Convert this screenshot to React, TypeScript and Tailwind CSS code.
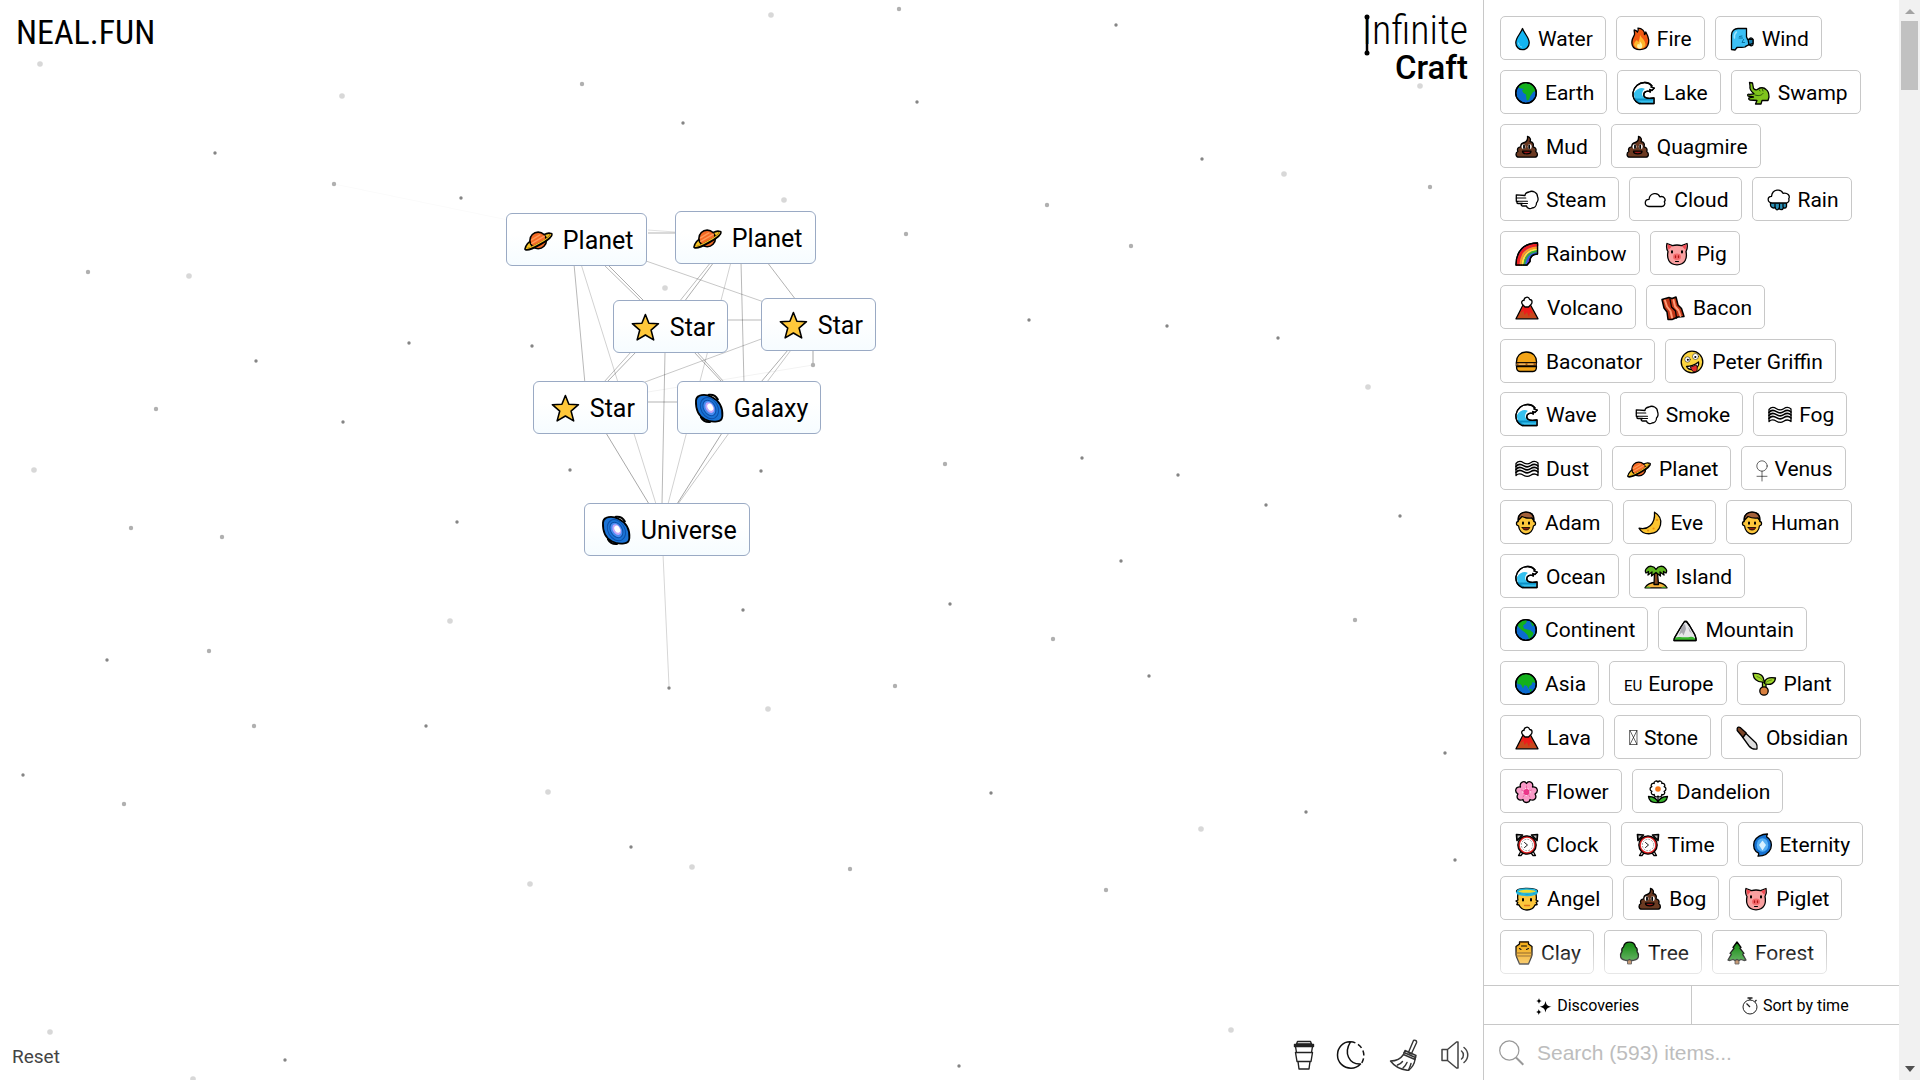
import { clsx } from 'clsx'
import type { ReactNode } from 'react'

type Glyph = { w: number; art: ReactNode }

const globe = (land: string) => (
	<>
		<circle cx="11" cy="12" r="10.3" fill="#0b6bd0" />
		<path d={land} fill="#12b01c" stroke="none" />
		<circle cx="11" cy="12" r="10.3" fill="none" />
	</>
)

const poop = (
	<>
		<path
			d="M12.500 1.300c3 1 3.500 3.500 2.500 5.200c3 .5 4 2.700 3 5.300c3 .7 3.600 2.700 2.700 4.700c2.500 1.500 2.200 5.500-.8 5.700H3.700C.3 22 .3 17.500 2.900 16.500c-1.200-2.700.4-4.500 2.900-4.700c-.2-2.700 1.300-3.800 3.400-4.300c2.300-.6 3.700-2.700 3.300-6.200z"
			fill="#6b3a22"
		/>
		<ellipse cx="8.500" cy="11.700" rx="2" ry="2.400" fill="#fff" stroke="none" />
		<ellipse cx="14.700" cy="11.700" rx="2" ry="2.400" fill="#fff" stroke="none" />
		<path d="M9 10.500v2.600M14.200 10.500v2.600" strokeWidth="1.800" />
		<path d="M7.500 16.200h8.500c0 3.500-8.500 3.500-8.500 0z" fill="#a01818" />
	</>
)

const volcano = (
	<>
		<path d="M8 9L1 22.800h22L15.500 9z" fill="#c8481c" />
		<path d="M8.500 9.500l-3 7l3-1.500l1 4l2.500-3l2 5l1-5l3 2l-3-8.500z" fill="#ee1b1b" stroke="none" />
		<path d="M8 9c-3-3 0-5 1-4.500C9 1 13.500-.3 14.700 3.500c3 0 3 4 .8 5.500l-2 2h-3.500z" fill="#fff" />
	</>
)

const waveShape =
	'M22 22.500H7C2 20 .5 16 1 11.500C2 5.500 7 1.300 13 1.500c3 .2 5.500 1.500 7 3.500l-1 1l3.300 1l-2.500 2.500l-2-1l.5 2.500c-3-2-7 0-6.500 3.500c.5 2.500 4 3.500 10.200 2.500z'

const wave = (
	<>
		<path d={waveShape} fill="#fff" />
		<path d="M2 12c3-5 8-6 11-4c-2 1-3.500 4-2.500 6.500c1.500 3 5 3.300 10.800 2.700V22H7.500C4 20 1.800 17 2 12z" fill="#35c0ee" stroke="none" />
		<path d="M3 18.500h18M8 22c-2-1-4-3-5-4" stroke="#0b8fc4" strokeWidth="2" strokeDasharray="2 1" />
		<path d={waveShape} fill="none" />
	</>
)

const puff = (
	<>
		<path
			d="M10 7.500c0-2.500 2.500-3.200 4-3.500c3.500-2 8.500.5 8.500 4.500c1 2.500.5 5-1 6.500c0 3-2 5-4.500 5c-2 1.500-5 .3-5.500-2H7.500c-1.800-.2-1.800-2.200 0-2.500H3c-1.500-.2-1.500-2 0-2.200H1.300V6.800z"
			fill="#fff"
		/>
		<path d="M1.300 10h9.500M3 13.300h9.500M7.500 15.500h5" strokeWidth="1.100" />
	</>
)

const fog = (
	<>
		<path
			d="M1 6.500c2-2.500 5-2.500 7.500-.8s5 1.500 7.200 0s5-1.800 7.300.3v12.500c-2.300-2-5-1.800-7.300-.3s-4.700 1.500-7.200 0S3 16.500 1 18.500z"
			fill="#fff"
		/>
		<path
			d="M1 9.500c2-2.500 5-2.500 7.500-.8s5 1.500 7.200 0s5-1.800 7.300.3M1 12.500c2-2.500 5-2.500 7.500-.8s5 1.500 7.200 0s5-1.800 7.300.3M1 15.500c2-2.500 5-2.500 7.500-.8s5 1.500 7.200 0s5-1.800 7.300.3"
			strokeWidth="1.600"
		/>
	</>
)

const pig = (
	<>
		<path d="M2 1.500l5.500 2.200c3-.9 6-.9 9 0L22 1.500c1 4-.2 6.500-1 8c1.500 7-1 13.300-9 13.300S1.500 16.500 3 9.500C2 8 1 5.500 2 1.500z" fill="#f9a0a0" />
		<path d="M2.500 2.200L7 4.200L3.500 8zM21.500 2.200L17 4.200L20.500 8z" fill="#f04a52" stroke="none" />
		<ellipse cx="12" cy="14.800" rx="4" ry="3.200" fill="#f4696b" stroke="none" />
		<path d="M10.500 14v1.600M13.500 14v1.600" stroke="#b01616" />
		<path d="M7 9.200v1.400M17 9.200v1.400" strokeWidth="2" />
		<path d="M10.500 19.500h3" strokeWidth="1" />
	</>
)

const planet = (
	<>
		<path d="M5.500 12.500C1.500 15.500.5 18.500 1.500 19.200c2.500 1.800 22-9 21.200-12.200c-.3-1.600-3-1.300-6.200.2" fill="#f7c325" />
		<circle cx="11.800" cy="12" r="6.900" fill="#f56a25" />
		<path d="M6.300 11.500l7-4M6.500 14.500l10.500-6M9 16.500l8.500-5" stroke="#ff9a58" strokeWidth="1.200" />
		<path d="M1.500 19.200c2.500 1.800 22-9 21.200-12.200" fill="none" stroke="#000" strokeWidth="2.600" />
		<path d="M2 18.600c2.800.8 19.600-8.600 20.200-11.400" fill="none" stroke="#f7c325" strokeWidth="1" />
	</>
)

const star = (
	<path
		d="M12 1.300l2.900 7.200l8 .4l-6.200 5.300l2.200 8.200L12 18.300l-6.900 4.100l2.200-8.200L1.100 8.900l8-.4z"
		fill="#ffc83a"
	/>
)

const galaxy = (
	<>
		<path
			d="M3.500 1.500C6 .4 10.500.6 14 2.500c6 3 9.300 9 8.800 16c-.3 3-1.800 4.300-4.300 4.300c-3.500.4-7 .1-10-1.600C3 18.500.5 12.500.8 5.500c.2-2.200 1.200-3.500 2.700-4z"
			fill="#1a73d6"
			strokeWidth="1.500"
		/>
		<path d="M11.500.7c3-.4 6 1 7.500 3.800M12.500 23.300c-3.500.3-6-1.200-7.500-4" strokeWidth="1.800" />
		<ellipse cx="12" cy="11.800" rx="7" ry="9.300" transform="rotate(-30 12 11.800)" fill="none" stroke="#0c4ea8" strokeWidth=".8" />
		<ellipse cx="12" cy="11.600" rx="4.800" ry="6.900" transform="rotate(-30 12 11.600)" fill="#4a8df0" stroke="#0c4ea8" strokeWidth=".8" />
		<ellipse cx="12.300" cy="11.300" rx="3.200" ry="4.800" transform="rotate(-30 12.300 11.300)" fill="#c3a5f8" stroke="none" />
		<ellipse cx="12.700" cy="11" rx="2.200" ry="3.100" transform="rotate(-30 12.700 11)" fill="#fff" stroke="none" />
	</>
)

const man = (
	<>
		<path d="M3.200 8c0-5 3.800-6.800 7.800-6.800S18.800 3 18.800 8v2.500c2.200 0 2.500 4-.3 4.300C18 19.500 15 23 11 23s-7-3.500-7.500-8.200C.7 14.500 1 10.500 3.200 10.500z" fill="#fcc63b" />
		<path d="M3.200 9.500c0-6 3.500-8.300 7.800-8.300s7.800 2.300 7.800 8.300l-2-2.500c-3 .5-7-.2-9.800-1.500z" fill="#a4613a" />
		<path d="M8 11.500v1.300M14 11.500v1.300" strokeWidth="2" />
		<path d="M7.200 16.500h7.600c-.8 3.400-6.800 3.400-7.600 0z" fill="#8a1c10" strokeWidth=".8" />
	</>
)

const clock = (
	<>
		<path d="M1.500 1.500l6 .5l-5.500 5.500zM22.500 1.500l-6 .5L22 7.500z" fill="#bcbcbc" strokeWidth="1.700" />
		<path d="M5.500 19l-2 3.500h2.500l1.500-2M18.500 19l2 3.500H18l-1.500-2" />
		<circle cx="12" cy="12" r="9.200" fill="#d92020" />
		<circle cx="12" cy="12" r="7.200" fill="#fff" stroke="none" />
		<circle cx="12" cy="12" r="5.700" fill="none" stroke="#999" strokeWidth="1" strokeDasharray="1 2" />
		<path d="M9.500 9.500l3 2.500l-3 2.500" strokeWidth=".9" />
	</>
)

const glyphs: Record<string, Glyph> = {
	drop: {
		w: 15,
		art: (
			<>
				<path d="M7.500 1.500c2 5.500 6.700 9 6.700 14.200c0 4-3 7-6.700 7s-6.700-3-6.700-7C.8 10.500 5.500 7 7.500 1.500z" fill="#12b5f2" />
				<path d="M3.500 16c.2 2 1.300 3.300 3 4" stroke="#7fe0ff" strokeWidth="1" />
			</>
		)
	},
	fire: {
		w: 18,
		art: (
			<>
				<path d="M7 1.200c4 0 7 3 6.500 6.300c1-.5 1.300-1.500 1.300-2.500c4 7 3.200 10 2 13.300c-2.300 5.500-13.300 6-15.500 0C-.5 13 3 9.500 3.500 7.500c.3-2-.5-3-.3-4.500c1.500.2 2.500 1 3.300 2c.8-1.200 1-2.500.5-3.800z" fill="#f05a12" />
				<path d="M9 8c1.500 3 5.500 5 5.500 10c-1 4.500-9.500 5-11.500 0c0-3 2-4 3-5c.5 1 .7 1.500 1.500 2C8 13 9 11 9 8z" fill="#ffb52b" stroke="none" />
				<path d="M9 14.500c3 3 3 7 0 7.200c-3.500-.2-3.300-3-2-5l1.300 1z" fill="#fff3a8" stroke="none" />
			</>
		)
	},
	wind: {
		w: 24,
		art: (
			<>
				<path d="M1.500 22.500V8c0-4 3-6.500 6.500-6.500h8.500v8.300l1 2.500h2.300v-1c1.500-.8 3.200 0 3.200 2v4c0 1.500-2 2-3 1l-.8-.8c-1.500 1-2.700.8-4.200 2.500c-2.500 1-5.500 0-8 .5L5 23z" fill="#3cc0f5" />
				<path d="M9 11h3.500M9.500 9.500l2.500-.5M13.500 12.500l-1.500 3h2.500" stroke="#0a6f9c" strokeWidth="1" />
				<path d="M18 12.300l1 5.500l4-1.500v-4z" fill="#157fae" />
				<path d="M6.500 5c-2 2-2.500 4-2 6" stroke="#9be4ff" strokeWidth="1.500" />
			</>
		)
	},
	earth: { w: 22, art: globe('M4 4.500c2-2 4.500-3 7.500-2.800l1 1.500l3-.5c3 1.800 4.700 4 5 7.300l-2.500 1c-1 2.500-2.500 3-3 5c-.5 2.500-2.500 5-3.500 2.500l-.5-5l-2.500-1.500L7 9.500l2-1.500l-5-1z') },
	americas: { w: 22, art: globe('M2.500 6.500c2-3 4-4.500 7.500-4.800l2 1.500l-1.500 2.500L8 7.500l1 3l3 1l3 .5l3.500 3c-.5 3-2 4.500-4.500 6l-1.500-4l-3-3l-3-2l-3-3zM15 3l4.500 3.500l-2 2z') },
	asia: { w: 22, art: globe('M3 5.500c3-3.500 9.500-5 14-1.500c2 1.500 3.500 4.500 3 7l-2.500-1l-1 3l-2 1l-1 3l-1.500-3l-2.500-1l-1.500 3.500l-2-4l-3.500-.5c-.5-2-.2-4.500.5-6.500zM14 17l3.500.5l-2 2.500z') },
	wave: { w: 23, art: wave },
	croc: {
		w: 24,
		art: (
			<>
				<path d="M3.500 1.500l3 .5l1 5.500c1.500 1.500 3 2 4.500.5c2-1.500 6-2 8 .5c2.500 1.500 3 4.500 3 7.500l-1 3.500h-6l-1 3.500H9.500l1.500-3.500l-7-.5c-2-.5-1.500-2.500 0-2.500l3.500-.5L2 15c-1-1.500 0-2 1.500-1.700l4.500-.5c-2.500-2-4.500-5.500-4-7.800z" fill="#7fc31c" />
				<path d="M9 14c3 1 6 1 8-1.500M13 8.500l1 1.500M16.500 8.500l.5 1.500" stroke="#27520a" strokeWidth="1" />
			</>
		)
	},
	poop: { w: 23, art: poop },
	puff: { w: 23, art: puff },
	cloud: {
		w: 22,
		art: <path d="M5 18.500C0 18 0 11.500 5 11.300C6 4.500 14 4 15.800 8.800c4.500-1.300 6.500 3 4.500 5c1.500 2-.3 4.700-2.500 4.700z" fill="#fff" />
	},
	rain: {
		w: 23,
		art: (
			<>
				<path d="M3.500 14.500h16v4c-.7 2-2.500 2-3 .8c-.5 3-4 3-4.300.5c-1 3-4 2.500-4-.5c-1.500 1.700-4.500 0-4.700-2z" fill="#2a8fb5" />
				<path d="M8 16v3M12.500 16v4M16 16v3" strokeWidth="1.200" />
				<path d="M5 15C0 14.500 0 8.500 4.500 8.300C5.500.8 14 .5 16 5.300c4.500-1 7.500 2.500 5.700 5.500c1 2.500-.9 4.200-2.900 4.200z" fill="#fff" />
			</>
		)
	},
	rainbow: {
		w: 23,
		art: (
			<>
				<path d="M1 23C1 9 9 1 22.500 1v11C17 12 15 15 15 19.500l-3 3.500z" fill="#7a2fc0" />
				<path d="M3 22.500C3.500 10.500 10.500 3.500 22 3" stroke="#ee2222" strokeWidth="3" />
				<path d="M5.500 22.500C6 12 12 6.300 22 5.500" stroke="#ff9a1c" strokeWidth="2" />
				<path d="M7.500 22.500C8 13.500 13.500 8 22 7.500" stroke="#ffe63a" strokeWidth="2" />
				<path d="M9.500 22.500C10 15 14.500 10 22 9.300" stroke="#35b435" strokeWidth="2" />
				<path d="M11 22.500C12 15.500 15.500 11.500 22 11" stroke="#2a6ae0" strokeWidth="1.500" />
				<path d="M1 23C1 9 9 1 22.500 1v11C17 12 15 15 15 19.500l-3 3.500z" fill="none" />
			</>
		)
	},
	pig: { w: 24, art: pig },
	volcano: { w: 24, art: volcano },
	bacon: {
		w: 24,
		art: (
			<>
				<path d="M1 3.500l7-2l3 1l4-1.500l2 8l3.500 3.500l2.500 8l-6 .5l-6 2.500h-4L6 16l-3-4z" fill="#c23616" strokeWidth="1.500" />
				<path d="M4 4.500l2 6l3.500 4.500l1.500 6.500M12.500 4l1.500 6.500l3.500 4l2 5.500" stroke="#ff9b77" strokeWidth="2" />
				<path d="M9 3l1.500 8l4 4l1 7" strokeWidth="1.300" />
			</>
		)
	},
	burger: {
		w: 23,
		art: (
			<>
				<path d="M1.500 13C1 6 5.500 2 11.500 2S22 6 21.500 13z" fill="#f4a416" />
				<path d="M1.500 12.500h20v3.500h-20z" fill="#a35b10" strokeWidth=".8" />
				<path d="M4 14.200h6M13 14.200h5" stroke="#e9b25a" strokeWidth="1.500" />
				<path d="M1.500 16.500h20c0 3-1 5-3.500 5H5c-2.500 0-3.500-2-3.500-5z" fill="#f4a416" />
			</>
		)
	},
	zany: {
		w: 24,
		art: (
			<>
				<circle cx="12" cy="12" r="10.800" fill="#fcd53f" />
				<circle cx="7.500" cy="9.500" r="2.700" fill="#fff" strokeWidth=".5" />
				<circle cx="15.500" cy="6.500" r="3" fill="#fff" strokeWidth=".5" />
				<path d="M7.800 9.700h.1M15.300 7h.1" strokeWidth="2" />
				<path d="M6.500 16.500c4 0 8-1.500 12-4.500c1.500 6-8 11-12 4.500z" fill="#fff" />
				<path d="M10.500 17c2-.5 4-1.200 5.800-2.200c1.700 3 1.200 6.500-1.300 7c-2.500.2-4-2-4.500-4.800z" fill="#e02c2c" strokeWidth=".8" />
			</>
		)
	},
	fog: { w: 23, art: fog },
	planet: { w: 24, art: planet },
	venus: {
		w: 12,
		art: (
			<g strokeWidth=".6">
				<circle cx="6" cy="9" r="5.200" fill="none" />
				<path d="M6 14.200V24M1 19.300h10" />
			</g>
		)
	},
	man: { w: 22, art: man },
	moon: {
		w: 24,
		art: (
			<>
				<path d="M16.500 1.200c10.500 6 7 20.500-4.500 21.500c-5 .3-9-2-11-5.500c8 2.200 16.500-3.500 15.500-16z" fill="#fcc42f" />
				<path d="M19 9h.2M15.500 17.500h.2M10 19.500h.2" stroke="#e8920e" strokeWidth="2" />
			</>
		)
	},
	island: {
		w: 24,
		art: (
			<>
				<path d="M1 22.800c2-4 7-5.300 11-5.300s9 1.300 11 5.300z" fill="#f9b43a" />
				<path d="M1 22.800c3-2 4-1.500 6 0h10c2-1.500 3-2 6 0z" fill="#4fb32c" stroke="none" />
				<path d="M10.500 8l-.5 11.500h4.500L13.500 8z" fill="#8a4b20" />
				<path d="M12 4.500C10 .5 5 .5 3 3C1 4.500 1 7 2 8l2.500-1.500L4 10l4-3l-.5 4L12 7.500l4.500 3.500L16 7l4 3l-.5-3.500L22 8c1-1 1-3.500-1-5c-2-2.500-7-2.500-9 1.500z" fill="#5fb520" />
			</>
		)
	},
	mountain: {
		w: 24,
		art: (
			<>
				<path d="M1 22.500c-.3-3 2-4.500 3-7L8.500 8l3-4.500h2l3 4l3.500 6c2 3 3.300 6 3 9z" fill="#e6e6ea" />
				<path d="M8.500 9L6 17l3-2.500l1.500 3L13 11l-1-5zM15 8.500l1.500 5l2.500 2z" fill="#a6a6ae" stroke="none" />
				<path d="M1 22.500c0-3 3-4 6-3.500c3 .5 8 .5 11-.3c2.500.3 4.500 1.300 5 3.800z" fill="#37b52c" stroke="none" />
				<path d="M1 22.500c-.3-3 2-4.500 3-7L8.500 8l3-4.500h2l3 4l3.500 6c2 3 3.300 6 3 9z" fill="none" />
			</>
		)
	},
	seedling: {
		w: 24,
		art: (
			<>
				<path d="M10.500 9v7.500h3.500V10z" fill="#9ed42b" />
				<path d="M1 1.500c7-1 11 2 11 8.500C5 10.500 1.500 7 1 1.500zM12.500 11.500c0-5 4-6.500 11-5.500c-.5 5-5 8-11 5.500z" fill="#9ed42b" />
				<path d="M5 4.500c3 1 5 2.500 6.500 5M19.500 8c-3 .5-4.500 1.500-6.500 3.500" stroke="#4e7d0c" strokeWidth=".8" />
				<circle cx="12" cy="19" r="4.200" fill="#d9803f" />
			</>
		)
	},
	knife: {
		w: 22,
		art: (
			<>
				<path d="M9 6.500L20 17c1.500 2 1.300 4 1 6c-3 .5-6-.5-8-3L6.500 11z" fill="#dcdcdc" />
				<path d="M1.200 2.500c.5-1.500 2-1.700 3-1l6 5.500L7 11.500L1.200 4.500z" fill="#7b4528" />
			</>
		)
	},
	blossom: {
		w: 23,
		art: (
			<>
				<path d="M11.500 3.500c2-3.500 7.500-1.500 6 3.500c5-.5 6.500 4.500 2.500 7c2.500 4-1 7.500-5 5.500c-.5 4-6.500 4-7 0c-4 2-7.500-1.500-5-5.500C-1 11.500.5 6.500 5.500 7C4 2 9.500 0 11.500 3.500z" fill="#f99bc8" />
				<circle cx="11.500" cy="12" r="3.500" fill="#f0348a" stroke="#fff" strokeWidth="1" strokeDasharray="1 1.500" />
				<path d="M11.500 12v-6M11.500 12l5-2M11.500 12l3.500 5M11.500 12l-3.500 5M11.500 12l-5-2" stroke="#e0408c" strokeWidth=".6" />
			</>
		)
	},
	daisy: {
		w: 22,
		art: (
			<>
				<path d="M11 14v8.500M1.500 16.500c4 0 8 1 9.500 6C6 23 2 21.500 1.500 16.500zM20.500 16.500c-4 0-8 1-9.500 6c5 .5 9-1 9.500-6z" fill="#37b52c" />
				<path d="M11 2c1.500-2 4.500-.5 3.800 1.500c2.500-.8 4 1.800 2.300 3.200c2.500.8 2.500 3.800 0 4.600c1.700 1.700-.3 4.200-2.300 3.200c.3 2.500-2.800 3-3.800 1.500c-1 1.500-4.100 1-3.800-1.500c-2 1-4-1.500-2.300-3.200c-2.500-.8-2.500-3.800 0-4.600C3.200 5.300 4.700 2.700 7.200 3.500C6.500 1.500 9.500 0 11 2z" fill="#fff" />
				<circle cx="11" cy="9" r="2.800" fill="#f5761a" stroke="none" />
			</>
		)
	},
	clock: { w: 23, art: clock },
	swirl: {
		w: 19,
		art: (
			<>
				<path d="M14.500 1c-.8 1-1 1.800-.8 2.800C18 6 19.200 11 17.800 15.500C16 20 11 23 5 23.200c.8-1.300.8-2.200.6-3C1 18 0 13 1.200 8.500C3 4 8.500 1 14.500 1z" fill="#1672d2" />
				<ellipse cx="9.500" cy="12" rx="5.800" ry="6.800" fill="#56b0f5" stroke="none" />
				<path d="M9.500 7.500l3.500 4.500l-3.500 5.500L6 12z" fill="#d9f2ff" stroke="none" />
			</>
		)
	},
	angel: {
		w: 24,
		art: (
			<>
				<path d="M3 7c1-4 5-5 9-5s8 1 9 5c.5 3 .5 5 0 6l2 1l-1.800 1.500l1 2l-2.200.5C18.500 21.500 16 23 12 23s-6.500-1.500-8-5l-2.200-.5l1-2L1 14l2-1c-.5-2-.5-4 0-6z" fill="#fcc63b" />
				<ellipse cx="12" cy="4.300" rx="10.500" ry="3" fill="#f2dc30" stroke="#000" />
				<ellipse cx="12" cy="4.300" rx="9.500" ry="2.300" fill="none" stroke="#22b6dd" strokeWidth="1.600" />
				<path d="M2 5.500c2 3.500 18 3.500 20 0" stroke="#22b6dd" strokeWidth="2" />
				<path d="M8 12v1.600M16 12v1.600" strokeWidth="2" />
				<path d="M9.500 18.500h5" stroke="#e0761c" />
			</>
		)
	},
	urn: {
		w: 18,
		art: (
			<>
				<path d="M4.500 1h9v2l3.500 2.500v8.500c-.5 3-2 5-3.500 9h-9c-1.500-4-3-6-3.500-9V5.500L4.500 3z" fill="#f4ae1d" />
				<path d="M1.500 12h15M1.500 15h15M5 1.300h8" stroke="#7d4b06" strokeWidth="1" />
				<path d="M4.500 7.500l1.500 1M11.500 8.500l2-1M6.500 5h5" stroke="#000" strokeWidth="1.100" />
			</>
		)
	},
	tree: {
		w: 21,
		art: (
			<>
				<path d="M8.500 17.500v5.500h4v-5.500z" fill="#a8652f" strokeWidth=".8" />
				<path d="M10.500 1.200c3.200 0 5.500 2 6 4.800c1.500 1 2 3 1.500 4.500c2.800 3.500 1.700 8-2.500 8.500c-1.500.8-3.500.5-5-.5c-1.500 1-3.500 1.300-5 .5c-4.200-.5-5.300-5-2.500-8.500C2.500 9 3 7 4.500 6C5 3.200 7.300 1.200 10.500 1.200z" fill="#1d8f1a" />
			</>
		)
	},
	pine: {
		w: 20,
		art: (
			<>
				<path d="M8 18.500V23h4v-4.500z" fill="#a8652f" strokeWidth=".8" />
				<path d="M10 1l4 5.500l-1 .8l4 5l-1.300 1L19 19l-2 .5l-3-1l-2 1l-2-1l-2 1l-2-1l-3 1L1 19l3.300-5.700l-1.300-1l4-5l-1-.8z" fill="#1d8f1a" />
			</>
		)
	},
	box: {
		w: 9,
		art: (
			<g strokeWidth=".6">
				<path d="M1 4.500h7v14H1zM1 4.500l7 14M8 4.500l-7 14" fill="none" />
			</g>
		)
	},
	star: { w: 24, art: star },
	galaxy: { w: 24, art: galaxy }
}

const items: [string, string][] = [
	['drop', 'Water'],
	['fire', 'Fire'],
	['wind', 'Wind'],
	['earth', 'Earth'],
	['wave', 'Lake'],
	['croc', 'Swamp'],
	['poop', 'Mud'],
	['poop', 'Quagmire'],
	['puff', 'Steam'],
	['cloud', 'Cloud'],
	['rain', 'Rain'],
	['rainbow', 'Rainbow'],
	['pig', 'Pig'],
	['volcano', 'Volcano'],
	['bacon', 'Bacon'],
	['burger', 'Baconator'],
	['zany', 'Peter Griffin'],
	['wave', 'Wave'],
	['puff', 'Smoke'],
	['fog', 'Fog'],
	['fog', 'Dust'],
	['planet', 'Planet'],
	['venus', 'Venus'],
	['man', 'Adam'],
	['moon', 'Eve'],
	['man', 'Human'],
	['wave', 'Ocean'],
	['island', 'Island'],
	['americas', 'Continent'],
	['mountain', 'Mountain'],
	['asia', 'Asia'],
	['eu', 'Europe'],
	['seedling', 'Plant'],
	['volcano', 'Lava'],
	['box', 'Stone'],
	['knife', 'Obsidian'],
	['blossom', 'Flower'],
	['daisy', 'Dandelion'],
	['clock', 'Clock'],
	['clock', 'Time'],
	['swirl', 'Eternity'],
	['angel', 'Angel'],
	['poop', 'Bog'],
	['pig', 'Piglet'],
	['urn', 'Clay'],
	['tree', 'Tree'],
	['pine', 'Forest']
]

// plain font characters sit closer to the name than emoji do
const narrow = ['venus', 'eu', 'box']

const nodes = [
	{ icon: 'planet', name: 'Planet', x: 506, y: 213 },
	{ icon: 'planet', name: 'Planet', x: 675, y: 211 },
	{ icon: 'star', name: 'Star', x: 613, y: 300 },
	{ icon: 'star', name: 'Star', x: 761, y: 298 },
	{ icon: 'star', name: 'Star', x: 533, y: 381 },
	{ icon: 'galaxy', name: 'Galaxy', x: 677, y: 381 },
	{ icon: 'galaxy', name: 'Universe', x: 584, y: 503 }
]

// x1, y1, x2, y2, opacity
const links = [
	[648, 233, 675, 233, 0.3],
	[648, 230, 675, 232, 0.12],
	[574, 264, 585, 384, 0.28],
	[581, 264, 656, 504, 0.18],
	[603, 264, 642, 302, 0.28],
	[607, 264, 645, 302, 0.32],
	[646, 261, 764, 302, 0.22],
	[711, 262, 679, 302, 0.26],
	[714, 262, 684, 302, 0.32],
	[731, 262, 668, 504, 0.18],
	[741, 262, 744, 384, 0.28],
	[767, 262, 796, 300, 0.3],
	[727, 320, 764, 320, 0.28],
	[764, 338, 645, 382, 0.22],
	[631, 352, 604, 382, 0.26],
	[636, 352, 607, 382, 0.32],
	[665, 352, 662, 504, 0.28],
	[694, 352, 722, 382, 0.32],
	[697, 352, 724, 382, 0.28],
	[788, 350, 761, 382, 0.32],
	[791, 350, 767, 382, 0.22],
	[813, 350, 813, 365, 0.35],
	[813, 365, 648, 392, 0.05],
	[334, 184, 508, 220, 0.02],
	[647, 402, 678, 402, 0.3],
	[606, 433, 649, 504, 0.34],
	[722, 433, 677, 504, 0.34],
	[729, 433, 678, 504, 0.22],
	[663, 554, 669, 686, 0.16]
]

const dots = [
	[771, 15, 3], [899, 9, 2], [1116, 25, 1], [40, 64, 3], [342, 96, 3], [582, 84, 2], [683, 123, 1],
	[917, 102, 1], [215, 153, 1], [334, 184, 2], [461, 198, 1], [784, 200, 3], [906, 234, 2],
	[1047, 205, 2], [1202, 159, 1], [1284, 174, 3], [1430, 187, 2], [1420, 86, 3], [88, 272, 2],
	[189, 276, 3], [532, 346, 1], [409, 343, 1], [256, 361, 1], [156, 409, 2], [343, 422, 1],
	[665, 288, 3], [813, 365, 2], [1131, 246, 2], [1029, 320, 1], [1167, 326, 1], [1278, 338, 1],
	[1368, 387, 3], [34, 470, 3], [131, 528, 2], [222, 537, 2], [457, 522, 1], [570, 470, 1],
	[761, 471, 1], [945, 464, 2], [1082, 458, 1], [1178, 475, 1], [1266, 505, 1], [1400, 516, 1],
	[1121, 561, 1], [950, 604, 1], [743, 610, 1], [450, 621, 3], [1053, 639, 2], [1355, 620, 2],
	[1149, 676, 1], [895, 686, 2], [669, 688, 1], [209, 651, 2], [107, 660, 1], [768, 709, 3],
	[254, 726, 2], [426, 726, 1], [23, 775, 1], [124, 804, 2], [548, 792, 3], [1445, 753, 1],
	[991, 793, 1], [1306, 812, 1], [1201, 829, 3], [1455, 860, 1], [631, 847, 1], [692, 867, 3],
	[850, 869, 2], [530, 884, 3], [1106, 890, 2], [50, 1032, 3], [285, 1060, 1], [193, 1079, 3],
	[959, 1066, 1], [1231, 1030, 3]
]

const Icon = ({ name, big }: { name: string; big?: boolean }) => {
	const { w, art } = glyphs[name]
	const scale = big ? 1.2 : 1
	return (
		<svg
			width={w * scale}
			height={24 * scale}
			viewBox={`0 0 ${w} 24`}
			className="shrink-0 overflow-visible"
			fill="none"
			stroke="#000"
			strokeWidth="1.3"
			strokeLinecap="round"
			strokeLinejoin="round"
			aria-hidden="true"
		>
			{art}
		</svg>
	)
}

const Item = ({ icon, name }: { icon: string; name: string }) => (
	<button
		type="button"
		className={clsx(
			'flex h-11 items-center rounded-[5px] border border-[#c8c8c8] bg-white pt-0.5 pr-3 pl-3.5 text-[21px] leading-6',
			narrow.includes(icon) ? 'gap-1.5' : 'gap-2'
		)}
	>
		{icon === 'eu' ? (
			<span className="pt-1 text-[15px] leading-5">EU</span>
		) : (
			<Icon name={icon} />
		)}
		{name}
	</button>
)

const Canvas = () => (
	<>
		<svg className="absolute inset-0 h-full w-full" aria-hidden="true">
			{links.map(([x1, y1, x2, y2, o], i) => (
				<line key={i} x1={x1} y1={y1} x2={x2} y2={y2} stroke="#000" strokeOpacity={o} />
			))}
			{dots.map(([x, y, s], i) => (
				<circle
					key={i}
					cx={x}
					cy={y}
					r={s === 1 ? 1.7 : s === 2 ? 2.2 : 2.8}
					fill={s === 1 ? '#858585' : s === 2 ? '#b0b0b0' : '#d8d8d8'}
				/>
			))}
		</svg>
		{nodes.map(({ icon, name, x, y }) => (
			<button
				type="button"
				key={`${x}-${y}`}
				style={{ left: x, top: y }}
				className="absolute flex h-[53px] items-center gap-2.5 rounded-md border border-[#9aaac4] bg-linear-to-b from-white from-40% to-[#f6fcff] pt-0.5 pr-3 pl-[17px] text-[25px] leading-7"
			>
				<Icon name={icon} big />
				{name}
			</button>
		))}
	</>
)

const toolClass = 'flex size-8 items-center justify-center'

const Tools = () => (
	<div className="flex items-center gap-[15px]">
		<button type="button" aria-label="Buy me a coffee" className={toolClass}>
			<svg width="22" height="32" viewBox="0 0 22 32" fill="none" stroke="#222" strokeWidth="1.400" strokeLinejoin="round">
				<path d="M4.500 2.500h13l1 2.500h-15z" />
				<path d="M1.500 5.500h19v2h-19z" fill="#222" />
				<path d="M2.500 7.500l1 6h15l1-6M2.500 13.500h17l-1.500 9H4zM5 22.500l1 7.500h10l1-7.500" />
			</svg>
		</button>
		<button type="button" aria-label="Dark mode" className={toolClass}>
			<svg width="30" height="30" viewBox="0 0 30 30" fill="none" stroke="#111" strokeWidth="1.500">
				<path d="M14.500 1.800C7 1.500 1.500 7.500 1.500 15S7.500 28.200 15 28.200c3.800 0 7-1.500 9.500-4.200C13 24.500 7.500 13 14.500 1.800z" strokeLinejoin="round" />
				<path d="M14.500 1.800c10 .5 17 11 11.300 21.200" strokeDasharray="5 3" />
			</svg>
		</button>
		<button type="button" aria-label="Clear canvas" className={clsx(toolClass, 'ml-1.5')}>
			<svg width="30" height="32" viewBox="0 0 30 32" fill="none" stroke="#333" strokeWidth="1.400" strokeLinecap="round" strokeLinejoin="round">
				<path d="M24.500 1.500c2-1 3.500.5 3 2.200L22.300 15l-3-1.300z" />
				<path d="M16 11.500l11 5l-1 4l-11.500-5z" />
				<path d="M14.500 15.500C11.500 20 6.500 22 1.500 22c4 5.500 9.500 8.500 18 9.500c3-2.500 6-6.500 6.500-11" />
				<path d="M15 13.500l11.500 5M13.500 22.500c-1.500 2-3.500 3-5 3.500M18 23.500c-1 2.500-2.500 4-4 5.500M22 24.500c-.5 2.500-1.500 4.500-2.500 6.500" />
			</svg>
		</button>
		<button type="button" aria-label="Sound" className={clsx(toolClass, 'ml-1')}>
			<svg width="30" height="30" viewBox="0 0 30 30" fill="none" stroke="#444" strokeWidth="1.500" strokeLinecap="round" strokeLinejoin="round">
				<path d="M2 9.500h5.500v11H2zM7.500 9.500l9-7.500h1.500v26h-1.500l-9-7.500" />
				<path d="M21.500 11c2.500 2 2.500 6 0 8M24 7.500c5 4 5 11 0 15" />
			</svg>
		</button>
	</div>
)

const Scrollbar = () => (
	<div className="flex w-[21px] shrink-0 flex-col items-center justify-between bg-[#f1f1f1] pb-2">
		<div className="flex flex-col items-center gap-[7px] pt-[9px]">
			<svg width="10" height="5" viewBox="0 0 10 5" aria-hidden="true">
				<path d="M0 5l5-5l5 5z" fill="#a3a3a3" />
			</svg>
			<div className="h-[69px] w-[17px] bg-[#c1c1c1]" />
		</div>
		<svg width="10" height="6" viewBox="0 0 10 6" aria-hidden="true">
			<path d="M0 0h10l-5 6z" fill="#505050" />
		</svg>
	</div>
)

const Sidebar = () => (
	<aside className="flex w-[437px] shrink-0 border-l border-[#c8c8c8]">
		<div className="flex min-w-0 flex-1 flex-col">
			<div className="relative min-h-0 flex-1 pt-4 pr-6 pb-[11px] pl-4">
				<div className="flex h-full flex-wrap content-between gap-x-2.5">
					{items.map(([icon, name]) => (
						<Item key={name} icon={icon} name={name} />
					))}
				</div>
				<div className="pointer-events-none absolute inset-x-0 bottom-0 h-10 bg-linear-to-b from-white/0 to-white/80" />
			</div>
			<div className="grid h-10 shrink-0 grid-cols-2 divide-x divide-[#c8c8c8] border-y border-[#c8c8c8] text-base">
				<button type="button" className="flex items-center justify-center gap-[5px] pt-0.5">
					<svg width="17" height="17" viewBox="0 0 16 17" aria-hidden="true">
						<path d="M10 3c.8 4 1.800 5 6 5.800c-4.200.8-5.200 1.800-6 5.800c-.8-4-1.800-5-6-5.800C8.200 8 9.200 7 10 3zM3.500 0c.4 2 1 2.600 3 3c-2 .4-2.600 1-3 3c-.4-2-1-2.600-3-3c2-.4 2.600-1 3-3zM3.300 11c.4 2 1 2.600 3 3c-2 .4-2.600 1-3 3c-.4-2-1-2.600-3-3c2-.4 2.600-1 3-3z" />
					</svg>
					Discoveries
				</button>
				<button type="button" className="flex items-center justify-center gap-[5px] pt-0.5">
					<svg width="16" height="18" viewBox="0 0 16 18" fill="none" stroke="#222" aria-hidden="true">
						<circle cx="8" cy="10" r="7" />
						<path d="M8 3V1M5.500 1h5M13 4.500l1.500-1.500M8 10L4.500 6.500" strokeWidth="1.300" />
					</svg>
					Sort by time
				</button>
			</div>
			<div className="flex h-[55px] shrink-0 items-center gap-[13px] pl-[15px]">
				<label htmlFor="search" aria-label="Search items">
					<svg width="25" height="26" viewBox="0 0 25 26" fill="none" stroke="#999" aria-hidden="true">
						<circle cx="10.300" cy="10.500" r="9.600" strokeWidth="1.200" />
						<path d="M17 17.500l7.300 7.300" strokeWidth="2" />
					</svg>
				</label>
				<input
					id="search"
					type="text"
					placeholder="Search (593) items..."
					className="min-w-0 flex-1 bg-transparent font-['Liberation_Sans',Arial,sans-serif] text-[21px] leading-7 outline-none placeholder:text-[#bdbdbd]"
				/>
			</div>
		</div>
		<Scrollbar />
	</aside>
)

const App = () => (
	<div className="flex h-screen overflow-hidden bg-white font-['Roboto',sans-serif] text-black">
		<main className="relative flex min-w-0 flex-1 flex-col justify-between">
			<Canvas />
			<header className="relative flex items-start justify-between pr-[15px] pl-4">
				<a
					href="#home"
					className="pt-3 font-['Liberation_Sans_Narrow','Roboto_Condensed','Open_Sans_Condensed','Liberation_Sans',sans-serif] text-[34px] leading-10"
				>
					NEAL.FUN
				</a>
				<h1 className="pt-2 text-right">
					<span className="relative block font-['Roboto_Condensed','Roboto',sans-serif] text-[40px] leading-[46px] font-light">
						Infinite
						<svg width="6" height="42" viewBox="0 0 6 42" className="absolute top-1.5 left-0.5" aria-hidden="true">
							<path d="M3 3v36" stroke="#000" strokeWidth="2.500" />
							<circle cx="3" cy="3" r="2.500" />
							<circle cx="3" cy="39" r="2.500" />
						</svg>
					</span>
					<span className="block text-[33px] leading-7 font-medium">Craft</span>
				</h1>
			</header>
			<footer className="relative flex items-center justify-between pr-3 pb-[9px] pl-3">
				<button type="button" className="pt-1 text-[19px] leading-6 text-[#444]">
					Reset
				</button>
				<Tools />
			</footer>
		</main>
		<Sidebar />
	</div>
)

export default App
